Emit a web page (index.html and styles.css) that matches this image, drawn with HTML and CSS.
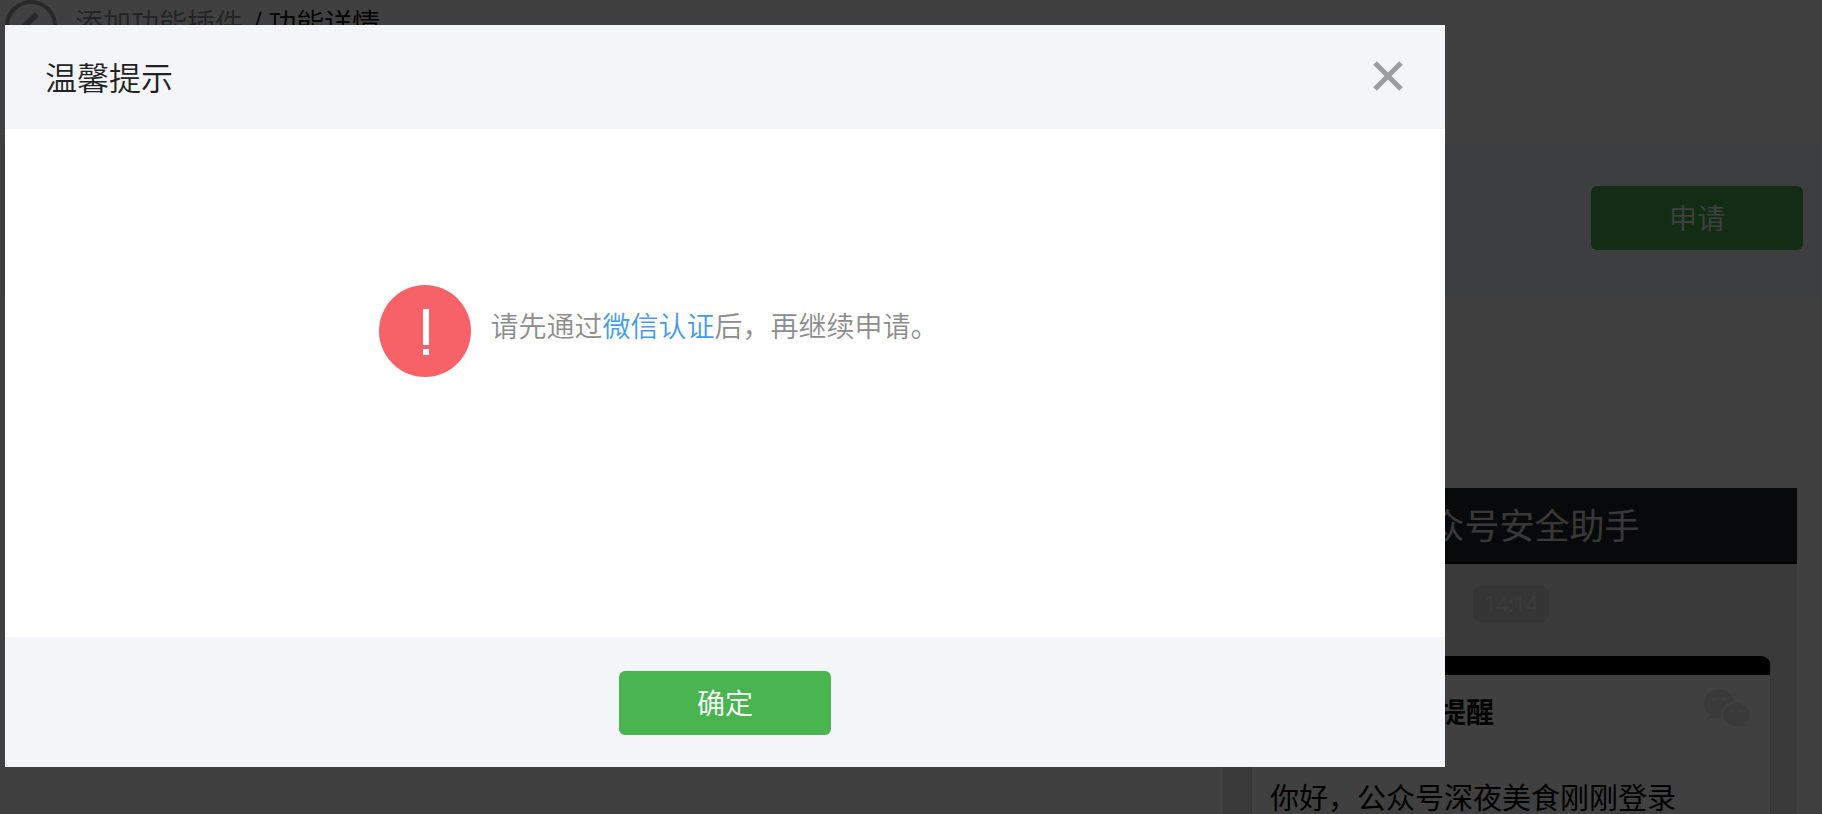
FILE: index.html
```html
<!DOCTYPE html>
<html lang="zh-CN">

<head>
    <meta charset="UTF-8">
    <meta name="viewport" content="width=device-width, initial-scale=1.0">
    <title>功能详情</title>
    <link rel="stylesheet" href="styles.css">
</head>

<body>
    <div class="page">
        <nav class="crumbs">
            <a class="back" href="#" aria-label="返回">
                <svg width="52" height="52" viewBox="0 0 52 52" fill="none" stroke="#a0a0a0">
                    <circle cx="26" cy="26" r="24" stroke-width="4" />
                    <path d="M30 16 L20 26 L30 36" stroke-width="6" stroke-linecap="round" />
                </svg>
            </a>
            <a class="crumb" href="#">添加功能插件</a>
            <span class="current">/ 功能详情</span>
        </nav>

        <div class="plugin-bar">
            <button class="btn" type="button">申请</button>
        </div>

        <div class="preview">
            <div class="phone">
                <div class="phone-title">公众号安全助手</div>
                <div class="phone-body">
                    <span class="time">14:14</span>
                    <div class="card">
                        <div class="card-head">
                            <h4>公众平台登录提醒</h4>
                            <svg class="wechat" width="46" height="38" viewBox="0 0 46 38">
                                <path fill="#e8e8e8" d="M15 0C7 0 0 6 0 14c0 5 2 8 6 11l-2 6 6-3c2 1 4 1 7 1-1-9 5-15 13-16C29 5 23 0 15 0z" />
                                <path fill="#e8e8e8" d="M32 14c-7 0-13 5-13 12s6 11 13 11c2 0 4 0 5-1l5 2-1-4c3-2 5-5 5-8 0-7-6-12-14-12z" />
                                <g fill="#f4f4f4">
                                    <circle cx="10" cy="10" r="2" />
                                    <circle cx="20" cy="10" r="2" />
                                    <circle cx="28" cy="22" r="2" />
                                    <circle cx="37" cy="22" r="2" />
                                </g>
                            </svg>
                        </div>
                        <p>你好，公众号深夜美食刚刚登录</p>
                    </div>
                </div>
            </div>
        </div>
    </div>

    <div class="mask">
        <div class="dialog" role="dialog" aria-labelledby="dialog-title">
            <div class="dialog-head">
                <h3 id="dialog-title">温馨提示</h3>
                <button class="close" type="button" aria-label="关闭">
                    <svg width="30" height="30" viewBox="0 0 30 30" stroke="#9c9d9f" stroke-width="5">
                        <path d="M2 2 L28 28 M28 2 L2 28" />
                    </svg>
                </button>
            </div>
            <div class="dialog-body">
                <svg class="warn" width="92" height="92" viewBox="0 0 92 92">
                    <circle cx="46" cy="46" r="46" fill="#f76268" />
                    <path fill="#fff" d="M44 24h6v36h-6z M44 64h6v6h-6z" />
                </svg>
                <p>请先通过<a href="#">微信认证</a>后，再继续申请。</p>
            </div>
            <div class="dialog-foot">
                <button class="btn" type="button">确定</button>
            </div>
        </div>
    </div>
</body>

</html>
```
FILE: styles.css
```css
* {
    box-sizing: border-box;
}

body {
    margin: 0;
    background: #fff;
    color: #000;
    font-family: "Noto Sans CJK SC", sans-serif;
    font-size: 28px;
    font-weight: 350;
    line-height: 40px;
    overflow: hidden;
}

h3, h4, p {
    margin: 0;
}

a {
    text-decoration: none;
}

.page {
    height: 100vh;
    overflow: hidden;
}

.btn {
    width: 212px;
    height: 64px;
    padding: 0 0 2px;
    border: 0;
    border-radius: 6px;
    background: #4ab451;
    color: #fff;
    font: inherit;
}

/* page behind the dialog */
.crumbs {
    display: flex;
    align-items: flex-start;
    height: 144px;
    padding-left: 5px;
}

.back {
    height: 52px;
    margin-right: 18px;
}

.crumbs .crumb,
.crumbs .current {
    padding-top: 2px;
}

.crumb {
    margin-right: 8px;
    color: #8c8c8c;
}

.plugin-bar {
    display: flex;
    justify-content: flex-end;
    padding: 42px 19px 46px;
    background: #f4f5f9;
}

.preview {
    display: flex;
    justify-content: flex-end;
    padding: 192px 25px 0;
}

.phone {
    width: 574px;
    background: #e8e8e8;
}

.phone-title {
    height: 76px;
    padding-left: 14px;
    border-bottom: 2px solid #000;
    background: #202429;
    color: #e0e0e0;
    font-size: 35px;
    font-weight: 400;
    line-height: 72px;
    text-align: center;
}

.phone-body {
    display: flex;
    flex-direction: column;
    align-items: center;
    padding: 22px 26px 0 28px;
}

.time {
    width: 76px;
    margin-bottom: 34px;
    border-radius: 8px;
    background: #d2d2d2;
    color: #ececec;
    font-family: "Noto Sans", sans-serif;
    font-size: 21px;
    font-weight: 400;
    line-height: 36px;
    text-align: center;
}

.card {
    width: 100%;
    height: 300px;
    border: 1px solid #d2d2d2;
    border-top: 19px solid #000;
    border-radius: 10px 10px 0 0;
    background: #fff;
}

.card-head {
    display: flex;
    justify-content: space-between;
    padding: 14px 20px 0 18px;
}

.card h4 {
    font-size: 28px;
    font-weight: 700;
    line-height: 44px;
}

.card p {
    padding: 46px 18px 0;
    font-size: 29px;
    font-weight: 400;
    line-height: 34px;
}

/* dialog */
.mask {
    position: fixed;
    inset: 0;
    padding: 25px 377px 0 5px;
    background: rgba(0, 0, 0, .75);
}

.dialog {
    background: #fff;
}

.dialog-head {
    display: flex;
    align-items: center;
    justify-content: space-between;
    height: 104px;
    padding: 0 42px 2px 40px;
    background: #f4f5f9;
}

.dialog-head h3 {
    color: #222;
    font-size: 32px;
    font-weight: 350;
}

.close {
    display: flex;
    padding: 0;
    border: 0;
    background: none;
}

.dialog-body {
    display: flex;
    padding: 156px 0 260px 26%;
    color: #8d8d8d;
}

.dialog-body p {
    padding: 20px 0 0 19px;
}

.dialog-body a {
    color: #459ae9;
}

.dialog-foot {
    padding: 34px 0 32px;
    background: #f4f5f9;
    text-align: center;
}

.dialog-foot .btn {
    display: block;
    margin: 0 auto;
}
```
